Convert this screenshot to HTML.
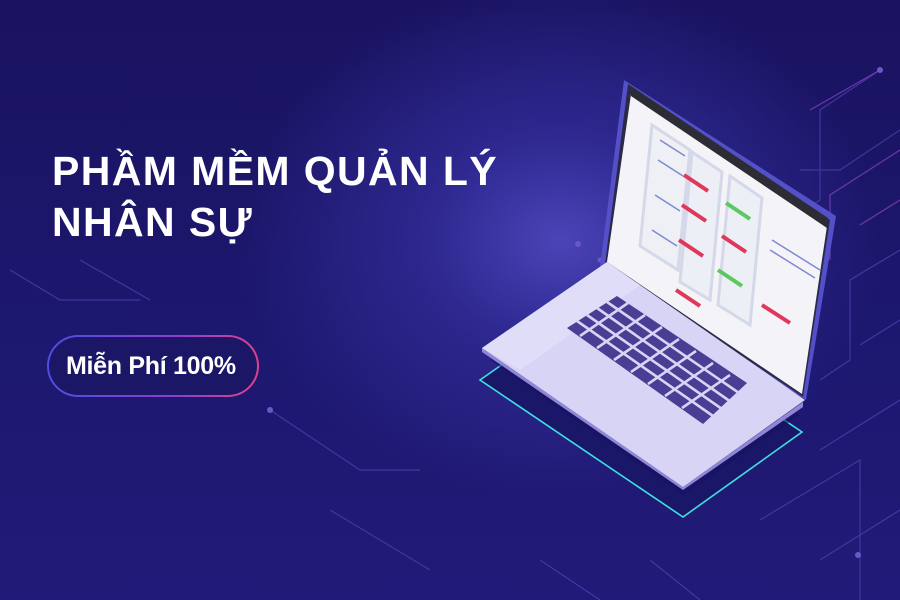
<!DOCTYPE html>
<html><head><meta charset="utf-8"><style>
html,body{margin:0;padding:0}
body{width:900px;height:600px;overflow:hidden;position:relative;background:#1a1463;font-family:"Liberation Sans",sans-serif}
.bg{position:absolute;inset:0;background:radial-gradient(ellipse 320px 260px at 560px 240px,#4a44b8 0%,#2e2890 40%,rgba(26,20,99,0) 100%),linear-gradient(180deg,#1a1360 0%,#1d1870 60%,#221a78 100%)}
h1{position:absolute;left:52px;top:146px;margin:0;color:#fff;font-size:41px;line-height:51px;font-weight:bold;letter-spacing:1.4px}
.btn{position:absolute;left:47px;top:335px;width:212px;height:62px;border-radius:31px;background:linear-gradient(90deg,#4c4ee0,#8a3fd0 60%,#e0408a);}
.btn div{position:absolute;inset:2px;border-radius:29px;background:#1c1666;color:#fff;font-weight:bold;font-size:25px;line-height:58px;padding-left:17px;letter-spacing:-0.3px}
svg{position:absolute;left:0;top:0}
</style></head><body>
<div class="bg"></div>
<svg width="900" height="600">
<g stroke="#4a3fa8" stroke-width="1.2" fill="none" opacity="0.8">
<path d="M880 70 L820 110 L820 200 L770 230"/>
<path d="M900 130 L840 170 L800 170"/>
<path d="M900 250 L850 280 L850 360 L820 380"/>
<path d="M900 320 L860 345"/>
<path d="M270 410 L360 470 L420 470"/>
<path d="M330 510 L430 570"/>
<path d="M540 560 L600 600"/>
<path d="M820 450 L900 400"/>
<path d="M760 520 L860 460 L860 600"/>
<path d="M580 245 L600 258"/>
<path d="M820 560 L900 510"/>
<path d="M650 560 L700 600"/>
<path d="M10 270 L60 300 L140 300"/>
<path d="M80 260 L150 300"/>
</g>
<g stroke="#8a48c8" stroke-width="1.2" fill="none" opacity="0.7">
<path d="M880 70 L810 110"/><path d="M900 150 L830 195 L830 260"/><path d="M900 200 L860 225"/>
</g>
<g fill="#6a58c8"><circle cx="880" cy="70" r="3"/><circle cx="270" cy="410" r="3"/><circle cx="578" cy="244" r="3"/><circle cx="600" cy="260" r="2.5"/><circle cx="858" cy="555" r="3"/></g>
<polygon points="480,380 600,296 802,432 683,517" fill="#1a1668" stroke="#3fe0e0" stroke-width="1.6"/>
<polygon points="490,360 683,495 800,415 610,280" fill="#171260" opacity="0.6"/>
<polygon points="624,80 836,216 806,400 600,266" fill="#5450c8"/>
<polygon points="628,84 830,220 803,397 605,264" fill="#2a2a48"/>
<polygon points="631,94 827,226 802,394 607,262" fill="#f4f4f8"/>
<polygon points="631,86 828,218 827,228 631,96" fill="#2c2c34"/>
<g fill="none" stroke="#d4d8e8" stroke-width="3">
<polygon points="652,125 690,150 678,270 640,246" fill="#eef0f6"/>
<polygon points="692,152 722,172 710,300 680,282" fill="#eceff6"/>
<polygon points="730,176 762,198 750,325 718,305" fill="#eceff6"/>
</g>
<g stroke-width="4">
<path d="M684 175 L708 191" stroke="#e0385a"/><path d="M682 205 L706 221" stroke="#e0385a"/><path d="M679 240 L703 256" stroke="#e0385a"/><path d="M676 290 L700 306" stroke="#e0385a"/>
<path d="M726 203 L750 219" stroke="#5cc860"/><path d="M722 236 L746 252" stroke="#e0385a"/><path d="M718 270 L742 286" stroke="#5cc860"/>
<path d="M762 305 L790 323" stroke="#e0385a"/>
</g>
<g stroke="#7d8ad0" stroke-width="1.5"><path d="M660 140 L685 156"/><path d="M658 160 L683 176"/><path d="M655 195 L680 211"/><path d="M652 230 L677 246"/><path d="M772 240 L820 270"/><path d="M770 250 L815 278"/></g>
<polygon points="482,352 683,490 803,407 803,402 683,487 482,348" fill="#8f86d8"/>
<polygon points="482,348 607,262 805,400 683,487" fill="#d8d4f6"/>
<polygon points="482,348 607,262 640,285 520,370" fill="#e6e3fa" opacity="0.6"/>
<polygon points="567,328 617,296 747,383 703,424" fill="#4a3d94"/>
<g stroke="#d8d4f6" stroke-width="2.6">
<path d="M577 321 L713 416"/><path d="M587 315 L722 409"/><path d="M597 308 L731 402"/><path d="M607 302 L739 393"/>
<path d="M580 336 L628 303"/><path d="M597 348 L645 315"/><path d="M614 360 L662 327"/><path d="M631 372 L679 339"/><path d="M648 384 L696 351"/><path d="M665 396 L713 363"/><path d="M682 408 L730 375"/>
</g>
</svg>
<h1>PHẦM MỀM QUẢN LÝ<br>NHÂN SỰ</h1>
<div class="btn"><div>Miễn Phí 100%</div></div>
</body></html>
